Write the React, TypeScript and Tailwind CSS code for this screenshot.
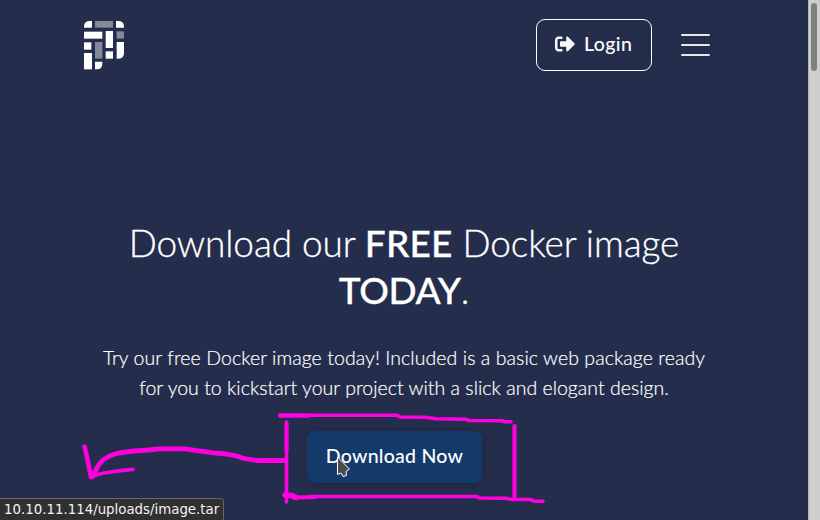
import React from "react";
import { FaSignOutAlt } from "react-icons/fa";

function Logo() {
  return (
    <svg className="mt-px block h-[50px] w-[42px]" viewBox="42 30 126 150" fill="#fff">
      <path d="M42 53V50Q42 33 59 33H66V53Z" />
      <path d="M75 33H129V53H75Z" fill="#85879a" />
      <path d="M138 33H145Q162 33 162 50V53H138Z" />
      <path d="M42 65H97V86H42Z" />
      <path d="M107 63H129V114H107Z" />
      <path d="M140 64H162V86H140Z" fill="#85879a" />
      <path d="M42 97H64V119H42Z" />
      <path d="M75 96H97V146H75Z" fill="#85879a" />
      <path d="M140 96H162V129Q162 146 145 146H140Z" />
      <path d="M107 124H129V146H107Z" />
      <path d="M42 129H66V178H42Z" />
      <path d="M75 155H97V161Q97 178 80 178H75Z" />
    </svg>
  );
}

function Header() {
  return (
    <header className="flex h-[52px] items-start pl-[84px] pr-[98px]">
      <Logo />
      <button className="ml-auto flex h-[52px] w-[116px] items-center rounded-[9px] border border-white pb-[2px] pl-[18px] text-[19.5px] font-medium">
        <FaSignOutAlt className="h-5 w-5 text-[#f9f9fa]" />
        <span className="ml-[9px] whitespace-nowrap tracking-[0.4px]">Login</span>
      </button>
      <div className="ml-[28px] mt-[15px] flex w-[30px] flex-col gap-[8px] px-[0.5px]">
        <span className="h-[2px] rounded-full bg-[#e5e6ea]" />
        <span className="h-[2px] rounded-full bg-[#e5e6ea]" />
        <span className="h-[2px] rounded-full bg-[#e5e6ea]" />
      </div>
    </header>
  );
}

function Annotation() {
  return (
    <svg
      className="pointer-events-none absolute left-0 top-0 h-[520px] w-[820px]"
      viewBox="0 0 820 520"
      fill="none"
      stroke="#ff00e1"
      strokeWidth="4"
      strokeLinecap="round"
      strokeLinejoin="round"
    >
      <path d="M280 415.5H308" strokeWidth="4.5" />
      <path d="M308 415.3H397L400 417L425 417.3L436 418.7L466 419.3L469 420.5L502 420.8L505 421.8H511" strokeWidth="3.6" />
      <path d="M286.5 422V502" strokeWidth="3.6" />
      <path d="M286.5 424V450" strokeWidth="4" />
      <path d="M514.5 426V497" strokeWidth="4.2" />
      <path d="M285 495L292 495.5L296 497.5" strokeWidth="5.5" />
      <path d="M293 497.5L315 497" strokeWidth="4" />
      <path d="M310 496.5H476L480 498L506 498.3L512 499.5H530L535 501.3H543" strokeWidth="3.5" />
      <path d="M286 460.5H257L244 458.5L236 455.8L226 454L214 452.8L197 450.7L185 448.8H159L149 450L134 451L119 453C106 456 99 462 96 470L92 477" strokeWidth="4.8" />
      <path d="M84.5 446.5L87 457L91 477" strokeWidth="4.6" />
      <path d="M91 477Q97 474.500 104 473L119 470.800L133 469.300" strokeWidth="3.7" />
    </svg>
  );
}

function Cursor() {
  return (
    <svg className="absolute left-[337px] top-[456px] h-[22px] w-[14px]" viewBox="0 0 14 22">
      <path d="M.5 1V18.5L4 17L6 20.5L9.5 19.5L9 15.5L12.5 13Z" fill="#4b4b4b" stroke="#fff" strokeWidth="1" />
    </svg>
  );
}

export default function App() {
  return (
    <div className="relative flex h-[520px] w-[820px] overflow-hidden bg-[#242d4b] font-['Lato',sans-serif] text-white">
      <main className="flex w-[808px] flex-col pt-[19px]">
        <Header />
        <h1 className="mt-[149px] flex flex-col items-center whitespace-nowrap text-[37px] font-light leading-[46.5px] tracking-[-0.1px]">
          <span className="[-webkit-text-stroke:0.3px_white]">
            Download our <b className="font-medium tracking-[0.2px]">FREE</b> Docker image
          </span>
          <span className="[-webkit-text-stroke:0.3px_white]">
            <b className="font-medium tracking-[-0.4px]">TODAY</b>.
          </span>
        </h1>
        <p className="mt-[30px] flex flex-col items-center whitespace-nowrap text-[19.5px] font-light leading-[30px] tracking-[0.07px] [-webkit-text-stroke:0.2px_white]">
          <span>Try our free Docker image today! Included is a basic web package ready</span>
          <span className="tracking-[0.02px]">for you to kickstart your project with a slick and elogant design.</span>
        </p>
        <button className="ml-[307px] mt-[28px] h-[52px] w-[175px] shrink-0 whitespace-nowrap rounded-lg bg-[#143a6b] pb-[2px] text-[19.5px] font-medium tracking-[0.25px] shadow-[0_2px_8px_rgba(0,0,0,0.15)]">
          Download Now
        </button>
      </main>
      <aside className="w-3 border-l border-[#b9b6b5] bg-[#cfcfcf] pl-[2px] pt-[3px]">
        <div className="h-[68px] w-[6px] rounded-full bg-[#7e8382]" />
      </aside>
      <Annotation />
      <Cursor />
      <div className="absolute bottom-0 left-0 h-[22px] w-[224px] whitespace-nowrap rounded-tr-[4px] border-r border-t border-[#68666a] bg-[#303030] pl-1 font-['DejaVu_Sans',sans-serif] text-[13.35px] leading-[21px] text-[#f4f4f4]">
        10.10.11.114/uploads/image.tar
      </div>
    </div>
  );
}
